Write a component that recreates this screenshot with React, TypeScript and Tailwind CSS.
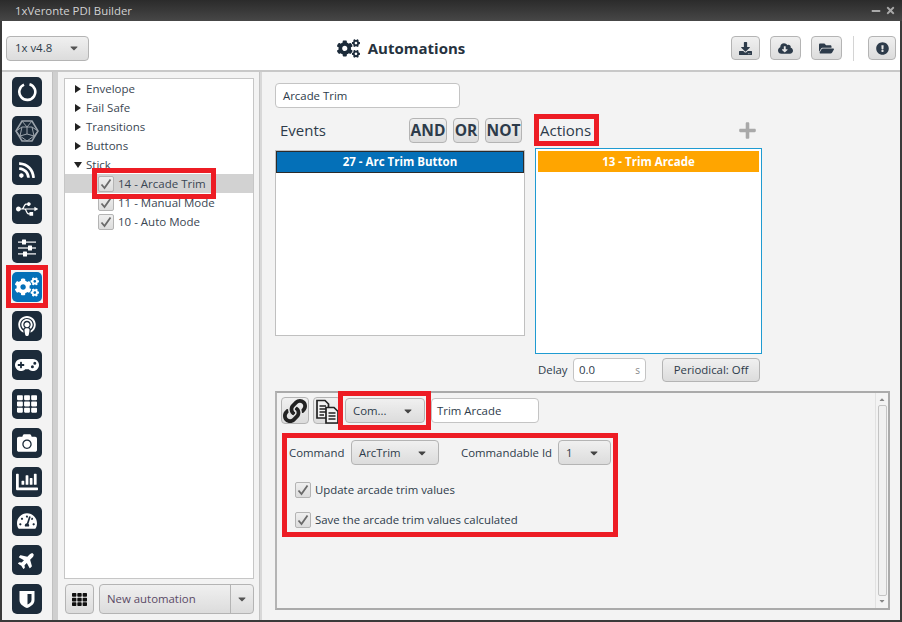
import React from "react";
import {
  FaRss, FaUsb, FaCogs, FaPodcast, FaGamepad, FaTh, FaCamera, FaChartBar,
  FaTachometerAlt, FaPlane, FaDownload, FaCloudDownloadAlt, FaFolderOpen, FaExclamationCircle,
  FaLink, FaPlus, FaCaretDown, FaMinus, FaTimes,
} from "react-icons/fa";

const font = { fontFamily: '"Open Sans", "Noto Sans", sans-serif' };

function Ring() {
  return (
    <svg width="20" height="20" viewBox="0 0 20 20" fill="none">
      <path d="M12.5 2.2 A8 8 0 1 1 7 2.6" stroke="white" strokeWidth="2.6" />
    </svg>
  );
}
function Hex() {
  return (
    <svg width="24" height="24" viewBox="0 0 24 24" fill="none" stroke="#9ba3ab" strokeWidth="1">
      <path d="M7 2 H17 L23 12 L17 22 H7 L1 12 Z" strokeWidth="1.6" />
      <path d="M7 2 L12 8 L17 2 M1 12 L7 8 H17 L23 12 M7 8 L5 17 L12 22 L19 17 L17 8 M1 12 L5 17 M23 12 L19 17 M12 8 V15 M5 17 L12 15 L19 17" />
    </svg>
  );
}
function Shield() {
  return (
    <svg width="18" height="20" viewBox="0 0 18 20">
      <path d="M1.5 2 H16.5 V11 C16.5 15 13 17.5 9 19 C5 17.5 1.5 15 1.5 11 Z" fill="white" />
      <path d="M9.5 5 H13.5 V11 C13.5 13 11.500 14.500 9.5 15.500 Z" fill="#1c2b3a" />
    </svg>
  );
}
function Sliders() {
  return (
    <svg width="20" height="20" viewBox="0 0 20 20" fill="white">
      <rect x="1" y="3.500" width="18" height="1.200" />
      <rect x="1" y="9.400" width="18" height="1.200" />
      <rect x="1" y="15.300" width="18" height="1.200" />
      <rect x="5" y="1.500" width="4" height="5" rx="0.500" />
      <rect x="11" y="7.500" width="4" height="5" rx="0.500" />
      <rect x="6" y="13.400" width="4" height="5" rx="0.500" />
    </svg>
  );
}
function PasteDocs() {
  return (
    <svg width="26" height="26" viewBox="0 0 26 26" fill="none" stroke="#222" strokeWidth="1.700">
      <path d="M3 2.500 H11 L14.500 6 V20 H3 Z" fill="#f2f2f2" />
      <path d="M5.500 8 H12 M5.500 11 H12 M5.500 14 H12 M5.500 17 H10" strokeWidth="1.300" />
      <path d="M12 9.500 H20 L24 13.500 V25 H12 Z" fill="#f2f2f2" />
      <path d="M14.500 15 H21.500 M14.500 18 H21.500 M14.500 21 H21.500" strokeWidth="1.300" />
    </svg>
  );
}

function Rail({ active, children }: { active?: boolean; children: React.ReactNode }) {
  return (
    <div className={`w-[30px] h-[30px] rounded-[5px] flex items-center justify-center text-white text-[18px] shrink-0 ${active ? "bg-[#0470b8]" : "bg-[#1c2b3a]"}`}>
      {children}
    </div>
  );
}

function Btn({ className = "", children }: { className?: string; children?: React.ReactNode }) {
  return (
    <div className={`flex items-center border border-[#b4b4b4] rounded-[4px] bg-gradient-to-b from-[#f0f0f0] to-[#dcdcdc] text-[#2d3b4a] ${className}`}>
      {children}
    </div>
  );
}

function Select({ label, className = "" }: { label: string; className?: string }) {
  return (
    <Btn className={`h-[25px] pl-[7px] pr-[10px] justify-between text-[11.4px] ${className}`}>
      <span>{label}</span>
      <FaCaretDown className="text-[#444] text-[12px]" />
    </Btn>
  );
}

function Field({ children, className = "" }: { children?: React.ReactNode; className?: string }) {
  return (
    <div className={`flex items-center bg-white border border-[#c4c4c4] rounded-[4px] text-[11.4px] text-[#2d3b4a] ${className}`}>
      {children}
    </div>
  );
}

function Check() {
  return (
    <div className="w-[16px] h-[16px] shrink-0 flex items-center justify-center border border-[#b4b4b4] rounded-[2px] bg-gradient-to-b from-[#efefef] to-[#dcdcdc]">
      <svg width="14" height="14" viewBox="0 0 14 14" fill="none" stroke="#6a6a6a" strokeWidth="1.800">
        <path d="M2.500 7.500 L5.500 11 L11.500 2.500" />
      </svg>
    </div>
  );
}

function Tri({ open }: { open?: boolean }) {
  return (
    <svg width="9" height="10" viewBox="0 0 9 10" fill="#222" className="shrink-0">
      {open ? <polygon points="0,2 8,2 4,8" /> : <polygon points="1,1 7,5 1,9" />}
    </svg>
  );
}

function TreeGroup({ label, open }: { label: string; open?: boolean }) {
  return (
    <div className="h-[19px] flex items-center pl-[9px] gap-[3px] text-[11.5px] text-[#3a4652]">
      <Tri open={open} />
      <span>{label}</span>
    </div>
  );
}

function TreeItem({ label, selected }: { label: string; selected?: boolean }) {
  return (
    <div className={`h-[19px] flex items-center pl-[33px] gap-[4px] text-[11.5px] text-[#3a4652] ${selected ? "bg-[#d2d2d2]" : ""}`}>
      <Check />
      <span>{label}</span>
    </div>
  );
}

function Mark({ className }: { className: string }) {
  return <div className={`absolute border-[5px] border-[#ed1c24] ${className}`} />;
}

export default function App() {
  return (
    <div className="relative w-[902px] h-[622px] flex flex-col overflow-hidden bg-[#3a3a3a]" style={font}>
      {/* title bar */}
      <div className="h-[21px] shrink-0 flex items-center justify-between pl-[15px] pr-[6px] bg-gradient-to-b from-[#2b2b2b] to-[#474747] text-[11.4px] text-[#d2d2d2]">
        <span>1xVeronte PDI Builder</span>
        <div className="flex items-center gap-[4px] text-[#a9a9a9] text-[10px]">
          <FaMinus />
          <FaTimes className="text-[11px]" />
        </div>
      </div>

      <div className="flex-1 flex flex-col mx-[2px] mb-[2px] min-h-0 bg-[#f3f3f3]">
        {/* toolbar */}
        <div className="h-[51px] shrink-0 bg-white border-b-2 border-[#c8c8c8] flex items-center pl-[4px] pr-[4px] pt-[5px]">
          <Btn className="w-[83px] h-[25px] pl-[8px] pr-[8px] justify-between text-[11.4px]">
            <span>1x v4.8</span>
            <FaCaretDown className="text-[#555] text-[12px]" />
          </Btn>
          <div className="flex-1 flex items-center justify-center gap-[8px] pr-[18px] text-[#26323e]">
            <FaCogs className="text-[23px] text-[#1c2b3a]" />
            <span className="text-[15px] font-bold">Automations</span>
          </div>
          <div className="flex items-center text-[#1c2b3a] text-[13px]">
            <Btn className="w-[29px] h-[24px] justify-center"><FaDownload /></Btn>
            <Btn className="w-[31px] h-[24px] justify-center ml-[10px]"><FaCloudDownloadAlt className="text-[15px]" /></Btn>
            <Btn className="w-[31px] h-[24px] justify-center ml-[10px]"><FaFolderOpen className="text-[15px]" /></Btn>
            <div className="w-px h-[25px] bg-[#d4d4d4] ml-[11px] mr-[14px]" />
            <Btn className="w-[28px] h-[24px] justify-center"><FaExclamationCircle /></Btn>
          </div>
        </div>

        <div className="flex-1 flex min-h-0">
          {/* icon rail */}
          <div className="w-[51px] shrink-0 flex flex-col items-center pt-[5px] gap-[9px] border-r border-[#c0c0c0] pr-[1px]">
            <Rail><Ring /></Rail>
            <Rail><Hex /></Rail>
            <Rail><FaRss /></Rail>
            <Rail><FaUsb className="text-[22px]" /></Rail>
            <Rail><Sliders /></Rail>
            <Rail active><FaCogs className="text-[24px]" /></Rail>
            <Rail><FaPodcast className="text-[20px]" /></Rail>
            <Rail><FaGamepad className="text-[24px]" /></Rail>
            <Rail><FaTh className="text-[20px]" /></Rail>
            <Rail><FaCamera className="text-[20px]" /></Rail>
            <Rail><FaChartBar className="text-[22px]" /></Rail>
            <Rail><FaTachometerAlt className="text-[20px]" /></Rail>
            <Rail><FaPlane className="text-[18px] -rotate-45" /></Rail>
            <Rail><Shield /></Rail>
          </div>
          <div className="w-[5px] shrink-0 bg-[#cfcfcf]" />

          {/* tree column */}
          <div className="w-[202px] shrink-0 flex flex-col pl-[6px] pr-[5px] pt-[6px] pb-[6px] border-r border-[#c4c4c4]">
            <div className="flex-1 bg-white border border-[#c6c6c6] min-h-0">
              <TreeGroup label="Envelope" />
              <TreeGroup label="Fail Safe" />
              <TreeGroup label="Transitions" />
              <TreeGroup label="Buttons" />
              <TreeGroup label="Stick" open />
              <TreeItem label="14 - Arcade Trim" selected />
              <TreeItem label="11 - Manual Mode" />
              <TreeItem label="10 - Auto Mode" />
            </div>
            <div className="h-[30px] mt-[5px] flex gap-[5px] shrink-0 pl-px">
              <Btn className="w-[29px] justify-center text-[#111] text-[15px]"><FaTh /></Btn>
              <Btn className="flex-1 text-[11.4px] text-[#5b4a66]">
                <span className="flex-1 pl-[7px]">New automation</span>
                <div className="w-[23px] h-full border-l border-[#b4b4b4] flex items-center justify-center">
                  <FaCaretDown className="text-[#555] text-[12px]" />
                </div>
              </Btn>
            </div>
          </div>
          <div className="w-[2px] shrink-0 bg-[#d8d8d8]" />

          {/* main */}
          <div className="flex-1 min-w-0 flex flex-col pl-[13px] pr-[10px] pt-[11px] pb-[10px] text-[#2d3b4a]">
            <Field className="w-[185px] h-[25px] pl-[7px] shrink-0">Arcade Trim</Field>

            <div className="flex mt-[10px] shrink-0">
              <div className="w-[250px] shrink-0 flex flex-col">
                <div className="h-[25px] flex items-center pl-[5px] pr-[3px]">
                  <span className="text-[15px] flex-1">Events</span>
                  <div className="flex gap-[6px] text-[15.500px] font-bold text-[#333]">
                    <Btn className="w-[38px] h-[25px] justify-center">AND</Btn>
                    <Btn className="w-[26px] h-[25px] justify-center">OR</Btn>
                    <Btn className="w-[37px] h-[25px] justify-center">NOT</Btn>
                  </div>
                </div>
                <div className="mt-[7px] h-[186px] bg-white border border-[#c0c0c0]">
                  <div className="h-[22px] bg-[#0470b8] border border-[#2b2b2b] flex items-center justify-center text-white text-[11.5px] font-bold">
                    27 - Arc Trim Button
                  </div>
                </div>
              </div>
              <div className="w-[227px] ml-[10px] shrink-0 flex flex-col">
                <div className="h-[25px] flex items-center pl-[5px] pr-[5px] justify-between">
                  <span className="text-[15px]">Actions</span>
                  <FaPlus className="text-[#a9a9a9] text-[19px]" />
                </div>
                <div className="mt-[5px] h-[206px] bg-white border border-[#1f9bd1] p-[2px]">
                  <div className="h-[21px] bg-[#ffa500] flex items-center justify-center text-white text-[11.5px] font-bold">
                    13 - Trim Arcade
                  </div>
                </div>
                <div className="mt-[4px] h-[24px] flex items-center pl-[3px] text-[11.4px]">
                  <span className="w-[35px]">Delay</span>
                  <Field className="w-[73px] h-[24px] px-[5px] justify-between">
                    <span>0.0</span>
                    <span className="text-[10px] text-[#888]">s</span>
                  </Field>
                  <Btn className="w-[98px] h-[24px] justify-center ml-[16px]">Periodical: Off</Btn>
                </div>
              </div>
            </div>

            {/* lower panel */}
            <div className="mt-[9px] flex-1 min-h-0 flex border-2 border-[#aaaaaa] border-l-[#b4b4b4]">
              <div className="flex-1 min-w-0 pl-[4px] pt-[4px]">
                <div className="flex items-center h-[27px]">
                  <Btn className="w-[28px] h-[27px] justify-center text-[#222] text-[24px]"><FaLink /></Btn>
                  <Btn className="w-[28px] h-[27px] justify-center ml-[4px]"><PasteDocs /></Btn>
                  <Select label="Com..." className="w-[80px] ml-[4px]" />
                  <Field className="w-[108px] h-[25px] pl-[5px] ml-[6px]">Trim Arcade</Field>
                </div>
                <div className="flex items-center mt-[16px] pl-[8px] text-[11.4px]">
                  <span className="w-[62px]">Command</span>
                  <Select label="ArcTrim" className="w-[88px]" />
                  <span className="ml-[22px] w-[97px]">Commandable Id</span>
                  <Select label="1" className="w-[53px]" />
                </div>
                <div className="flex items-center gap-[4px] mt-[16px] pl-[14px] text-[11.4px] leading-[18px]">
                  <Check />
                  <span>Update arcade trim values</span>
                </div>
                <div className="flex items-center gap-[4px] mt-[12px] pl-[14px] text-[11.4px] leading-[18px]">
                  <Check />
                  <span>Save the arcade trim values calculated</span>
                </div>
              </div>
              <div className="w-[13px] shrink-0 flex flex-col items-center py-[3px] border-l border-[#e2e2e2] text-[#888] text-[8px]">
                <FaCaretDown className="rotate-180" />
                <div className="w-[9px] flex-1 my-[1px] border border-[#c4c4c4] rounded-[2px] bg-[#f0f0f0]" />
                <FaCaretDown />
              </div>
            </div>
          </div>
        </div>
      </div>

      {/* red annotation frames over the screenshot */}
      <Mark className="left-[92px] top-[168px] w-[124px] h-[31px]" />
      <Mark className="left-[6px] top-[265px] w-[42px] h-[43px]" />
      <Mark className="left-[534px] top-[114px] w-[65px] h-[32px]" />
      <Mark className="left-[338px] top-[391px] w-[93px] h-[39px]" />
      <Mark className="left-[282px] top-[433px] w-[336px] h-[104px]" />
    </div>
  );
}
